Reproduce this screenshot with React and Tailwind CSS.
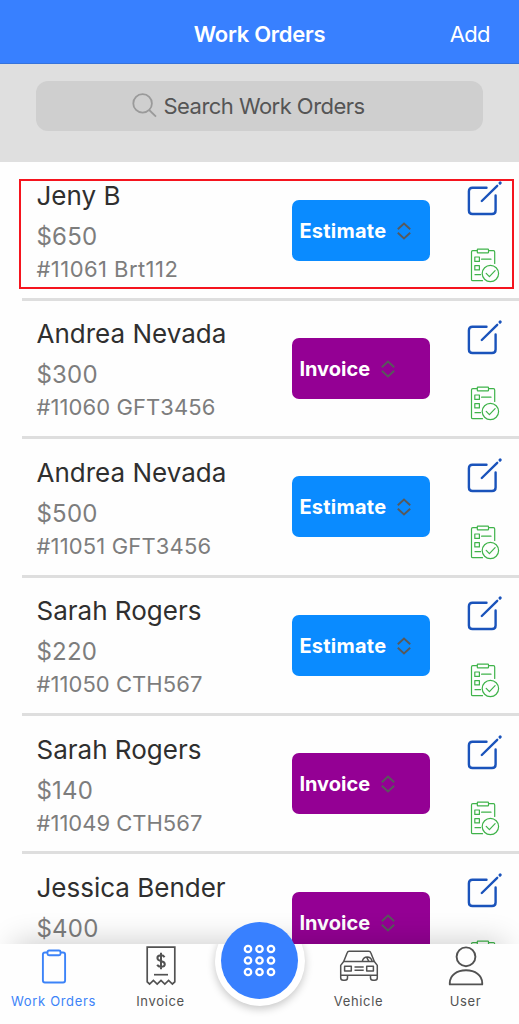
import React from 'react';

const orders = [
  { name: 'Jeny B', price: '$650', id: '#11061 Brt112', status: 'Estimate', idClass: 'tracking-[0.44px]' },
  { name: 'Andrea Nevada', price: '$300', id: '#11060 GFT3456', status: 'Invoice', idClass: 'tracking-[0.08px]' },
  { name: 'Andrea Nevada', price: '$500', id: '#11051 GFT3456', status: 'Estimate', idClass: 'tracking-[0.15px]' },
  { name: 'Sarah Rogers', price: '$220', id: '#11050 CTH567', status: 'Estimate', idClass: 'tracking-[0.05px]' },
  { name: 'Sarah Rogers', price: '$140', id: '#11049 CTH567', status: 'Invoice', idClass: 'tracking-[0px]' },
  { name: 'Jessica Bender', price: '$400', status: 'Invoice' },
];

function EditIcon() {
  return (
    <svg width="36" height="36" viewBox="0 0 36 36" fill="none" stroke="#1a53bb" strokeWidth="2.4" strokeLinecap="round" className="block">
      <path d="M19.5 6.7H5.5Q1.9 6.7 1.9 10.3V29.4Q1.9 33 5.5 33H25Q28.6 33 28.6 29.4V14.5" />
      <path d="M14.8 20L30.2 4.8" />
      <path d="M33 2.1L33.2 1.9" strokeWidth="2.9" />
    </svg>
  );
}

function ChecklistIcon() {
  return (
    <svg width="30" height="35" viewBox="0 0 30 35" fill="none" stroke="#3fb34a" strokeWidth="1.2" strokeLinecap="round" strokeLinejoin="round" className="block">
      <path d="M6.9 2.6H2.8Q1.5 2.6 1.5 3.9V31.4Q1.5 32.7 2.8 32.7H12.5" />
      <path d="M18.7 2.6H23.4Q24.7 2.6 24.7 3.9V15.5" />
      <rect x="7.3" y="1.2" width="11.2" height="3.6" rx=".6" />
      <rect x="4.8" y="9" width="4.6" height="4.4" />
      <rect x="4.8" y="17.7" width="4.6" height="4.2" />
      <path d="M11.6 11.2H21M5 26.7H10.6" />
      <circle cx="20.4" cy="25.5" r="8.2" />
      <path d="M16.2 25.4L19.4 28.7L25.1 22.7" />
    </svg>
  );
}

function SortIcon() {
  return (
    <svg width="14" height="18" viewBox="0 0 14 18" fill="none" stroke="#58595b" strokeWidth="1.9" className="block">
      <path d="M.8 7.2L7 1.6L13.2 7.2M.8 10.8L7 16.4L13.2 10.8" />
    </svg>
  );
}

function OrderRow({ order }) {
  const estimate = order.status === 'Estimate';
  return (
    <li className="ml-[22px] flex h-[138.4px] shrink-0 border-b-[3px] border-[#dedede] pl-[14.5px]">
      <div className="w-[255.4px] shrink-0 whitespace-nowrap pt-[16.7px] text-[#7d7d7d]">
        <h2 className="text-[26px] leading-[34px] text-[#2f2f2f]">{order.name}</h2>
        <p className="pt-[2px] text-[24px] leading-[44px] tracking-[0.2px]">{order.price}</p>
        {order.id && <p className={`text-[22px] leading-[20px] ${order.idClass}`}>{order.id}</p>}
      </div>
      <button
        className={`mt-[37.3px] flex h-[61px] w-[138.5px] shrink-0 items-center gap-[10.5px] rounded-[7px] pl-[7.5px] text-[20px] font-bold text-white ${
          estimate ? 'bg-[#0a8bff]' : 'bg-[#940094]'
        }`}
      >
        <span className={estimate ? 'pt-px tracking-[0.25px]' : 'pt-px'}>{order.status}</span>
        <span className="pt-px">
          <SortIcon />
        </span>
      </button>
      <div className="ml-[36.2px] flex flex-col gap-[30.5px] pt-[18.9px]">
        <EditIcon />
        <div className="pl-[3px]">
          <ChecklistIcon />
        </div>
      </div>
    </li>
  );
}

function ClipboardIcon() {
  return (
    <svg width="26" height="36" viewBox="0 0 26 36" fill="none" stroke="#3c83f8" strokeWidth="1.9" className="block">
      <path d="M6.5 3.5H4Q1.9 3.5 1.9 5.6V31.4Q1.9 33.5 4 33.5H22Q24.1 33.5 24.1 31.4V5.6Q24.1 3.5 22 3.5H19.5" />
      <rect x="6.5" y="1.5" width="13" height="4.8" rx="1.5" />
    </svg>
  );
}

function InvoiceIcon() {
  return (
    <svg width="30" height="40" viewBox="0 0 30 40" fill="none" stroke="#525252" strokeWidth="1.7" className="block">
      <path d="M1.2 1.2H28.8V35.8L26.4 38L22.6 34.4L18.8 38L15 34.4L11.2 38L7.4 34.4L3.6 38L1.2 35.8Z" />
      <path d="M18.5 11.2Q17.5 9.3 15 9.3Q11.4 9.3 11.4 12Q11.4 14.2 15 15Q18.8 15.9 18.8 18.2Q18.8 20.8 15 20.8Q12.2 20.8 11.2 18.8M15 6.8V23.3" strokeWidth="2" />
      <path d="M8 28.7H22" />
    </svg>
  );
}

function VehicleIcon() {
  return (
    <svg width="40" height="34" viewBox="0 0 40 34" fill="none" stroke="#525252" strokeWidth="1.5" strokeLinejoin="round" className="block">
      <path d="M4.7 12.5L8.2 3.7Q8.7 2.3 10.2 2.3H29.8Q31.3 2.3 31.8 3.7L35.3 12.5" />
      <path d="M1.7 26.2V16.4L4.7 12.5H35.3L38.3 16.4V26.2Z" />
      <path d="M1.7 26V28.8Q1.7 31.3 4.2 31.3H6Q8.5 31.3 8.5 28.8V26.2M31.5 26.2V28.8Q31.5 31.3 34 31.3H35.8Q38.3 31.3 38.3 28.8V26" />
      <rect x="5.6" y="17.2" width="6.7" height="4.9" />
      <rect x="27.7" y="17.2" width="6.7" height="4.9" />
      <path d="M15.5 18.1H24.7M15.5 21.3H24.7M23.3 12.3Q24.3 8 28.2 8Q32.1 8 33.1 12.3M27.6 8.2L29.8 12.3" />
    </svg>
  );
}

function UserIcon() {
  return (
    <svg width="36" height="40" viewBox="0 0 36 40" fill="none" stroke="#525252" strokeWidth="1.9" strokeLinejoin="round" className="block">
      <circle cx="18" cy="10.8" r="9.4" />
      <path d="M1.8 38.4V37C1.8 29 9 24.3 18 24.3S34.2 29 34.2 37V38.4Z" />
    </svg>
  );
}

function Tab({ label, active, children }) {
  return (
    <a className={`flex w-[107px] flex-col items-center text-[13px] leading-[18px] tracking-[0.65px] ${active ? 'text-[#3c83f8]' : 'text-[#525252]'}`}>
      <span className="flex h-[48px] items-start">{children}</span>
      <span className="whitespace-nowrap">{label}</span>
    </a>
  );
}

export default function App() {
  return (
    <div className="relative flex h-[1024px] w-[519px] flex-col overflow-hidden bg-[#fefefe] font-['Inter',sans-serif]">
      <header className="grid h-[64px] shrink-0 grid-cols-[1fr_auto_1fr] items-center border-b border-[#3673db] bg-[#3880ff] pt-[5px] text-white">
        <span />
        <h1 className="text-[22px] font-semibold tracking-[-0.27px]">Work Orders</h1>
        <button className="justify-self-end pr-[29px] text-[22px] tracking-[-0.6px]">Add</button>
      </header>

      <div className="h-[98.4px] shrink-0 bg-[#dfdfdf] px-[36px] pt-[17px]">
        <div className="flex h-[49.5px] items-center rounded-[12px] bg-[#cfcfcf] pl-[96px]">
          <svg width="25" height="25" viewBox="0 0 25 25" fill="none" stroke="#9a9a9a" strokeWidth="1.8" className="block">
            <circle cx="10.6" cy="10.4" r="9.3" />
            <path d="M17.2 17L24 23.6" />
          </svg>
          <span className="ml-[6.5px] whitespace-nowrap pt-[2px] text-[22px] tracking-[-0.54px] text-[#555]">Search Work Orders</span>
        </div>
      </div>

      <ul className="flex min-h-0 flex-1 flex-col overflow-hidden">
        {orders.map((o, i) => (
          <OrderRow key={i} order={o} />
        ))}
      </ul>

      <div className="pointer-events-none absolute left-[19px] top-[179px] h-[110px] w-[495px] border-2 border-[#f5141e]" />

      <nav className="relative h-[80px] shrink-0 bg-[#fefefe]">
        <div className="absolute -top-[34px] left-0 h-[34px] w-full overflow-hidden">
          <div className="absolute left-[16px] right-[16px] top-[34px] h-[30px] shadow-[0_0_30px_2px_rgba(0,0,0,0.2)]" />
        </div>
        <div className="absolute inset-0 flex justify-center overflow-hidden">
          <div className="-mt-[28px] h-[90px] w-[90px] shrink-0 rounded-full bg-white shadow-[0_3px_9px_rgba(0,0,0,0.22)]" />
        </div>
        <div className="absolute -top-[22px] left-[221px] grid h-[77px] w-[77px] place-items-center rounded-full bg-[#3880ff]">
          <svg width="33" height="33" viewBox="0 0 33 33" fill="none" stroke="#fff" strokeWidth="2.3" className="block">
            {[5, 16.5, 28].map((y) => [5, 16.5, 28].map((x) => <circle key={`${x}-${y}`} cx={x} cy={y} r="3.2" />))}
          </svg>
        </div>
        <div className="relative flex justify-between">
          <div className="flex">
            <Tab label="Work Orders" active>
              <span className="pt-[5px]"><ClipboardIcon /></span>
            </Tab>
            <Tab label="Invoice">
              <span className="pt-[2.3px]"><InvoiceIcon /></span>
            </Tab>
          </div>
          <div className="flex">
            <Tab label="Vehicle">
              <span className="pt-[5px]"><VehicleIcon /></span>
            </Tab>
            <Tab label="User">
              <span className="pt-[2px]"><UserIcon /></span>
            </Tab>
          </div>
        </div>
      </nav>
    </div>
  );
}
